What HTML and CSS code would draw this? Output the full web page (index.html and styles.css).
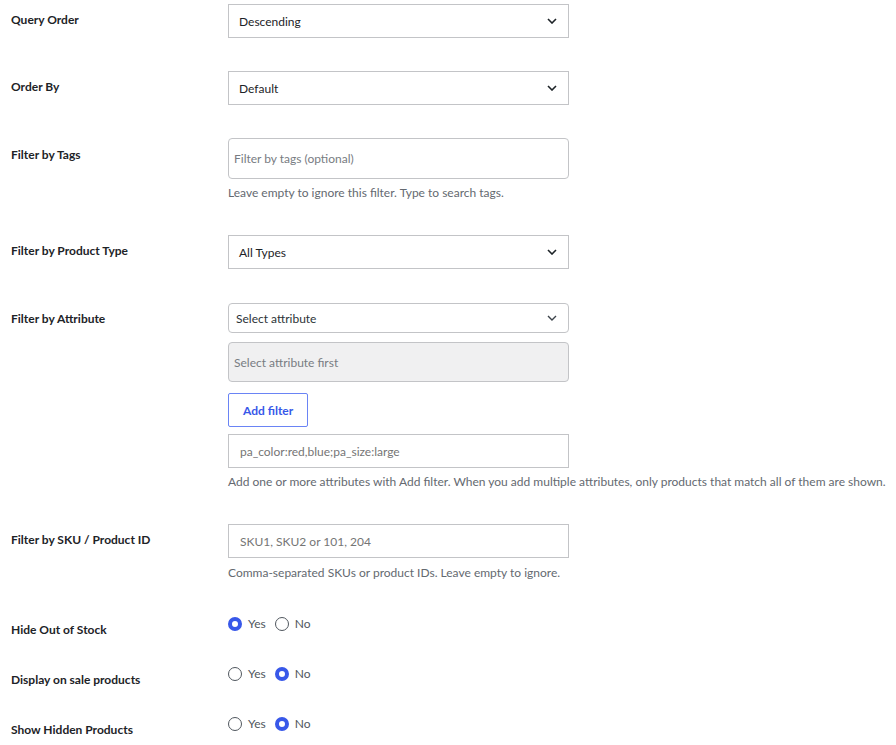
FILE: index.html
```html
<!DOCTYPE html>
<html lang="en">
<head>
<meta charset="utf-8">
<title>Product filters</title>
<link rel="stylesheet" href="styles.css">
</head>
<body>
<div class="form">
  <div class="row">
    <div class="th">Query Order</div>
    <div class="td">
      <div class="select">
        <span>Descending</span>
        <svg class="chev" width="10" height="6" viewBox="0 0 10 6"><path d="M1 1l4 4 4-4" fill="none" stroke="#1d2327" stroke-width="1.6"/></svg>
      </div>
    </div>
  </div>

  <div class="row">
    <div class="th">Order By</div>
    <div class="td">
      <div class="select">
        <span>Default</span>
        <svg class="chev" width="10" height="6" viewBox="0 0 10 6"><path d="M1 1l4 4 4-4" fill="none" stroke="#1d2327" stroke-width="1.6"/></svg>
      </div>
    </div>
  </div>

  <div class="row">
    <div class="th th-tags">Filter by Tags</div>
    <div class="td">
      <div class="input tags placeholder">Filter by tags (optional)</div>
      <p class="help help-tags">Leave empty to ignore this filter. Type to search tags.</p>
    </div>
  </div>

  <div class="row row-type">
    <div class="th">Filter by Product Type</div>
    <div class="td">
      <div class="select">
        <span>All Types</span>
        <svg class="chev" width="10" height="6" viewBox="0 0 10 6"><path d="M1 1l4 4 4-4" fill="none" stroke="#1d2327" stroke-width="1.6"/></svg>
      </div>
    </div>
  </div>

  <div class="row">
    <div class="th th-attr">Filter by Attribute</div>
    <div class="td">
      <div class="select attr">
        <span>Select attribute</span>
        <svg class="chev" width="10" height="6" viewBox="0 0 10 6"><path d="M1 1l4 4 4-4" fill="none" stroke="#3c434a" stroke-width="1.4"/></svg>
      </div>
      <div class="input disabled placeholder">Select attribute first</div>
      <button class="btn" type="button">Add filter</button>
      <div class="input plain placeholder">pa_color:red,blue;pa_size:large</div>
      <p class="help">Add one or more attributes with Add filter. When you add multiple attributes, only products that match all of them are shown.</p>
    </div>
  </div>

  <div class="row">
    <div class="th">Filter by SKU / Product ID</div>
    <div class="td">
      <div class="input plain placeholder">SKU1, SKU2 or 101, 204</div>
      <p class="help help-sku">Comma-separated SKUs or product IDs. Leave empty to ignore.</p>
    </div>
  </div>

  <div class="row radio-row first-radio">
    <div class="th">Hide Out of Stock</div>
    <div class="td radios">
      <label class="opt"><span class="radio on"></span>Yes</label>
      <label class="opt"><span class="radio"></span>No</label>
    </div>
  </div>

  <div class="row radio-row">
    <div class="th">Display on sale products</div>
    <div class="td radios">
      <label class="opt"><span class="radio"></span>Yes</label>
      <label class="opt"><span class="radio on"></span>No</label>
    </div>
  </div>

  <div class="row radio-row">
    <div class="th">Show Hidden Products</div>
    <div class="td radios">
      <label class="opt"><span class="radio"></span>Yes</label>
      <label class="opt"><span class="radio on"></span>No</label>
    </div>
  </div>
</div>
</body>
</html>
```

FILE: styles.css
```css
* { box-sizing: border-box; }

html, body {
  margin: 0;
  padding: 0;
  background: #ffffff;
}

body {
  font-family: Lato, "Noto Sans", Arial, sans-serif;
  font-size: 12px;
  color: #1d2327;
  overflow: hidden;
}

.form {
  padding: 4px 0 0 11px;
}

.row {
  display: grid;
  grid-template-columns: 217px auto;
  align-items: start;
  margin-bottom: 33px;
}

.row-type { margin-bottom: 34px; }

.th {
  font-weight: 700;
  line-height: 18px;
  padding-top: 7px;
  color: #1d2327;
  white-space: nowrap;
}

.th-tags { padding-top: 8px; }
.th-attr { padding-top: 7px; }

.td {
  display: flex;
  flex-direction: column;
  align-items: flex-start;
}

.select {
  width: 341px;
  height: 34px;
  border: 1px solid #c3c4c7;
  background: #fff;
  display: flex;
  align-items: center;
  justify-content: space-between;
  padding: 0 11px 0 10px;
  color: #1d2327;
}

.select.attr {
  height: 30px;
  border-radius: 4px;
  border-color: #c3c4c7;
  padding-left: 7px;
  color: #2c3338;
}

.chev { display: block; }

.input {
  width: 341px;
  height: 34px;
  border: 1px solid #c3c4c7;
  background: #fff;
  display: flex;
  align-items: center;
  padding: 0 11px;
}

.placeholder { color: #757575; }

.input.tags {
  height: 41px;
  border-radius: 4px;
  padding-left: 5px;
  color: #787c82;
}

.input.disabled {
  height: 40px;
  margin-top: 9px;
  border-radius: 4px;
  background: #f0f0f1;
  border-color: #c3c4c7;
  padding-left: 5px;
  color: #787c82;
}

.btn {
  margin-top: 11px;
  height: 34px;
  padding: 0 14px;
  border: 1px solid #6a84f5;
  border-radius: 2px;
  background: #fff;
  color: #3858e9;
  font-family: inherit;
  font-size: 12px;
  font-weight: 700;
}

.btn + .input { margin-top: 7px; }

.help {
  margin: 5px 0 0 0;
  line-height: 18px;
  color: #646970;
  white-space: nowrap;
}

.help-sku { margin-top: 6px; }

.radio-row { margin-bottom: 25px; }
.first-radio { margin-top: -1px; }

.radios {
  flex-direction: row;
  align-items: center;
  gap: 9px;
  height: 18px;
  margin-top: 1px;
}

.opt {
  display: flex;
  align-items: center;
  gap: 6px;
  line-height: 18px;
  color: #50575e;
}

.radio {
  width: 14px;
  height: 14px;
  border-radius: 50%;
  border: 1px solid #50575e;
  background: #fff;
  display: inline-block;
}

.radio.on {
  border: 4px solid #3858e9;
}
```
